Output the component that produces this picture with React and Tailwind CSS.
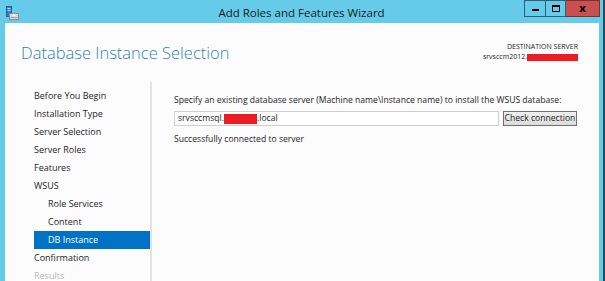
import React from "react";

const navItems = [
  { label: "Before You Begin" },
  { label: "Installation Type" },
  { label: "Server Selection" },
  { label: "Server Roles" },
  { label: "Features" },
  { label: "WSUS" },
  { label: "Role Services", sub: true },
  { label: "Content", sub: true },
  { label: "DB Instance", sub: true, active: true },
  { label: "Confirmation" },
  { label: "Results", disabled: true },
];

const WizardIcon = () => (
  <svg width="13" height="14" viewBox="0 0 13 14">
    <rect x="0.5" y="0.5" width="5" height="10" fill="#2f7fd1" stroke="#1d5fa6" />
    <rect x="1.5" y="2" width="3" height="1" fill="#bfe3ff" />
    <rect x="1.5" y="4" width="3" height="1" fill="#bfe3ff" />
    <rect x="3.5" y="7.5" width="9" height="6" fill="#d9d9d9" stroke="#8a8a8a" />
    <path d="M6 9.5 L8 7.5 L10 9.5 Z" fill="#ffffff" />
    <rect x="4.5" y="11" width="7" height="1" fill="#a0a0a0" />
  </svg>
);

const TitleButtons = () => (
  <div className="flex self-start mr-[3px] h-[17px]">
    <div className="w-[21px] h-full border border-[#2e5f73] border-r-0 flex items-end justify-center pb-[5px]">
      <div className="w-[7px] h-[2px] bg-black" />
    </div>
    <div className="w-[21px] h-full border border-[#2e5f73] flex items-center justify-center">
      <div className="w-[8px] h-[7px] border border-black border-t-2" />
    </div>
    <div className="w-[34px] h-full bg-[#c75050] border border-l-0 border-[#7a3030] flex items-center justify-center">
      <span className="text-[11px] font-bold leading-none text-black font-['DejaVu_Sans',sans-serif]">x</span>
    </div>
  </div>
);

export default function App() {
  return (
    <div className="w-[605px] h-[281px] bg-[#65cbe9] border-r-2 border-[#27495a] flex flex-col overflow-hidden font-['Open_Sans',sans-serif] text-[#1e1e1e]">
      {/* title bar */}
      <div className="h-[23px] shrink-0 grid grid-cols-[1fr_auto_1fr] items-center">
        <div className="pl-[6px] pt-[2px]">
          <WizardIcon />
        </div>
        <div className="text-[11.5px] text-[#1a1a1a] pt-[2px]">Add Roles and Features Wizard</div>
        <div className="flex justify-end self-start">
          <TitleButtons />
        </div>
      </div>

      {/* body */}
      <div className="flex-1 ml-[5px] mr-[4px] bg-[#fcfcfc] flex flex-col">
        <div className="h-[59px] shrink-0 flex justify-between pl-[16px] pr-[21px]">
          <h1 className="mt-[18px] text-[16.5px] font-light leading-[24px] text-[#2f86b0]">
            Database Instance Selection
          </h1>
          <div className="mt-[19px] text-right text-[7px] leading-[10px] text-[#1e1e1e]">
            <div>DESTINATION SERVER</div>
            <div className="flex items-center justify-end">
              <span>srvsccm2012.</span>
              <span className="inline-block w-[51px] h-[7px] bg-[#ed1c24]" />
            </div>
          </div>
        </div>

        <div className="flex-1 flex">
          <ul className="w-[145px] pl-[29px] pt-[5px] text-[9px]">
            {navItems.map((item) => (
              <li
                key={item.label}
                className={`h-[18px] flex items-center ${item.sub ? "pl-[14px]" : ""} ${
                  item.active ? "bg-[#0072c6] text-white" : item.disabled ? "text-[#b8b8b8]" : "text-[#1e1e1e]"
                }`}
              >
                {item.label}
              </li>
            ))}
          </ul>
          <div className="w-[2px] bg-[#e3e3e3]" />
          <div className="flex-1 pl-[22px] pt-[12px] text-[8.6px]">
            <p className="leading-[12px]">
              Specify an existing database server (Machine name\Instance name) to install the WSUS database:
            </p>
            <div className="mt-[5px] flex items-center gap-[4px]">
              <div className="w-[325px] h-[15px] bg-white border border-[#cfcfcf] flex items-center pl-[3px]">
                <span>srvsccmsql.</span>
                <span className="inline-block w-[33px] h-[10px] bg-[#ed1c24]" />
                <span>.local</span>
              </div>
              <button className="w-[74px] h-[15px] border border-[#707070] bg-gradient-to-b from-[#efefef] to-[#dcdcdc] text-[8.6px] leading-none text-[#1e1e1e]">
                Check connection
              </button>
            </div>
            <p className="mt-[7px] leading-[12px]">Successfully connected to server</p>
          </div>
        </div>
      </div>
    </div>
  );
}
